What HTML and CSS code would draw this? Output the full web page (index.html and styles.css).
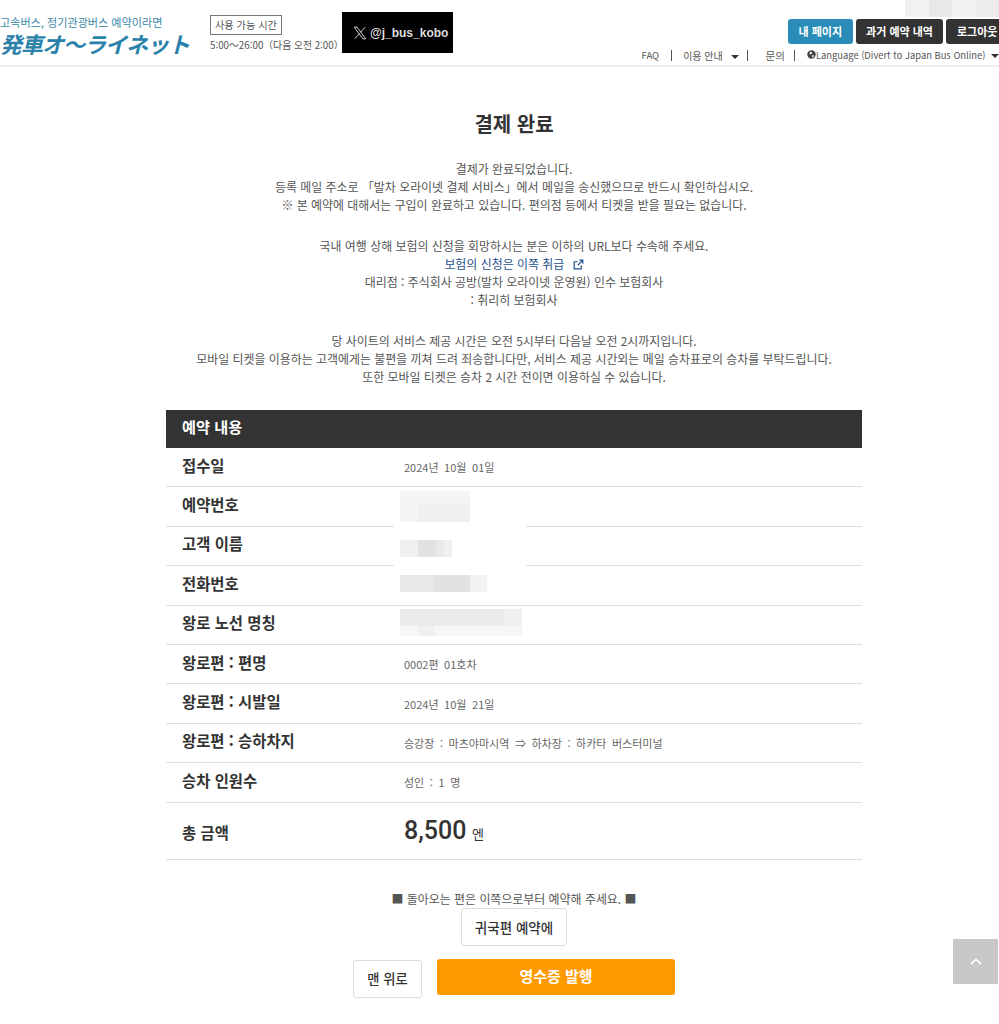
FILE: index.html
```html
<!DOCTYPE html>
<html lang="ko">
<head>
    <meta charset="UTF-8">
    <meta name="viewport" content="width=device-width, initial-scale=1.0">
    <title>결제 완료</title>
    <link rel="stylesheet" href="styles.css">
</head>
<body>
    <header class="site-header">
        <div class="logo">
            <p class="logo-sub">고속버스, 정기관광버스 예약이라면</p>
            <p class="logo-main">発車オ～ライネット</p>
        </div>
        <div class="hours">
            <span class="hours-label">사용 가능 시간</span>
            <p class="hours-time">5:00～26:00（다음 오전 2:00）</p>
        </div>
        <a class="x-link" href="#">
            <svg class="x-icon" viewBox="0 0 24 24" width="14" height="14"><path fill="none" stroke="#ddd" stroke-width="1.6" d="M2 2h5l15 20h-5zM21 2l-8 9M3 22l8-9"/></svg>
            <span>@j_bus_kobo</span>
        </a>
        <div class="header-right">
            <div class="header-buttons">
                <a class="head-btn head-btn-blue" href="#">내 페이지</a>
                <a class="head-btn" href="#">과거 예약 내역</a>
                <a class="head-btn" href="#">로그아웃</a>
            </div>
            <ul class="sub-nav">
                <li class="sub-faq">FAQ</li>
                <li class="sub-guide">이용 안내 <i class="caret"></i></li>
                <li class="sub-contact">문의</li>
                <li class="sub-lang">
                    <svg viewBox="0 0 16 16" width="9" height="9"><circle cx="8" cy="8" r="7.5" fill="#444"/><path fill="#fff" d="M5 3l4 1-1 3-3 1zM9 9l4 1-3 4z"/></svg>Language (Divert to Japan Bus Online) <i class="caret"></i>
                </li>
            </ul>
        </div>
    </header>
    <div class="mosaic-top"><i></i><i></i><i></i><i></i></div>

    <main class="content">
        <h1 class="page-title">결제 완료</h1>

        <div class="message">
            <p>결제가 완료되었습니다.</p>
            <p>등록 메일 주소로 「발차 오라이넷 결제 서비스」에서 메일을 송신했으므로 반드시 확인하십시오.</p>
            <p>※ 본 예약에 대해서는 구입이 완료하고 있습니다. 편의점 등에서 티켓을 받을 필요는 없습니다.</p>
        </div>
        <div class="message">
            <p>국내 여행 상해 보험의 신청을 회망하시는 분은 이하의 URL보다 수속해 주세요.</p>
            <p><a class="link" href="#">보험의 신청은 이쪽 취급
                <svg viewBox="0 0 14 14" width="11" height="11"><path fill="none" stroke="#1d4f8c" stroke-width="1.5" d="M10.5 8v4.5h-9v-9H6M8 1.5h4.5V6M12.5 1.5L6 8"/></svg></a></p>
            <p>대리점 : 주식회사 공방(발차 오라이넷 운영원) 인수 보험회사</p>
            <p>: 취리히 보험회사</p>
        </div>
        <div class="message">
            <p>당 사이트의 서비스 제공 시간은 오전 5시부터 다음날 오전 2시까지입니다.</p>
            <p>모바일 티켓을 이용하는 고객에게는 불편을 끼쳐 드려 죄송합니다만, 서비스 제공 시간외는 메일 승차표로의 승차를 부탁드립니다.</p>
            <p>또한 모바일 티켓은 승차 2 시간 전이면 이용하실 수 있습니다.</p>
        </div>

        <section class="summary">
            <h2 class="summary-title">예약 내용</h2>
            <div class="row"><div class="row-label">접수일</div><div class="row-value">2024년 10월 01일</div></div>
            <div class="row"><div class="row-label">예약번호</div><div class="row-value"></div></div>
            <div class="row"><div class="row-label">고객 이름</div><div class="row-value"></div></div>
            <div class="row"><div class="row-label">전화번호</div><div class="row-value"></div></div>
            <div class="row"><div class="row-label">왕로 노선 명칭</div><div class="row-value"></div></div>
            <div class="row"><div class="row-label">왕로편 : 편명</div><div class="row-value">0002편 01호차</div></div>
            <div class="row"><div class="row-label">왕로편 : 시발일</div><div class="row-value">2024년 10월 21일</div></div>
            <div class="row"><div class="row-label">왕로편 : 승하차지</div><div class="row-value">승강장 : 마츠야마시역 ⇒ 하차장 : 하카타 버스터미널</div></div>
            <div class="row"><div class="row-label">승차 인원수</div><div class="row-value">성인 : 1 명</div></div>
            <div class="row row-total"><div class="row-label">총 금액</div><div class="row-value"><span class="price">8,500</span> <span class="yen">엔</span></div></div>

            <!-- blurred personal data -->
            <svg class="redact" width="132" height="152" viewBox="0 0 132 152">
                <rect x="0" y="34" width="132" height="80" fill="#fff"/>
                <rect x="6" y="0" width="70" height="31" fill="#f5f5f5"/>
                <rect x="24" y="12" width="52" height="19" fill="#f0f0f0"/>
                <rect x="6" y="49" width="52" height="17" fill="#f0f0f0"/>
                <rect x="24" y="49" width="18" height="17" fill="#e2e2e2"/>
                <rect x="42" y="49" width="8" height="17" fill="#e9e9e9"/>
                <rect x="6" y="84" width="87" height="17" fill="#f2f2f2"/>
                <rect x="6" y="84" width="70" height="17" fill="#e8e8e8"/>
                <rect x="40" y="84" width="36" height="17" fill="#e2e2e2"/>
                <rect x="6" y="118" width="122" height="17" fill="#f0f0f0"/>
                <rect x="6" y="118" width="104" height="17" fill="#eaeaea"/>
                <rect x="6" y="135" width="122" height="10" fill="#f6f6f6"/>
                <rect x="24" y="135" width="16" height="10" fill="#f0f0f0"/>
            </svg>
        </section>

        <p class="return-note">■ 돌아오는 편은 이쪽으로부터 예약해 주세요. ■</p>
        <div class="return-action"><a class="btn-white btn-return" href="#">귀국편 예약에</a></div>
        <div class="actions">
            <a class="btn-white btn-top" href="#">맨 위로</a>
            <a class="btn-orange" href="#">영수증 발행</a>
        </div>
    </main>

    <a class="to-top" href="#">
        <svg viewBox="0 0 14 8" width="12" height="7"><path fill="none" stroke="#fff" stroke-width="2" d="M1 7l6-5.5L13 7"/></svg>
    </a>
</body>
</html>
```

FILE: styles.css
```css
* {
    box-sizing: border-box;
}
html, body {
    overflow-x: hidden;
}
body {
    margin: 0;
    background: #fff;
    color: #555;
    font-family: "Noto Sans CJK KR", "Noto Sans", sans-serif;
    font-size: 11.95px;
}
p, h1, h2, ul {
    margin: 0;
    padding: 0;
}
a {
    text-decoration: none;
}

/* header */
.site-header {
    display: flex;
    height: 67px;
    border-bottom: 2px solid #eee;
    width: 999px;
    overflow: hidden;
}
.logo {
    width: 210px;
    padding-top: 15px;
}
.logo-sub {
    color: #3a87a8;
    font-size: 11.1px;
    line-height: 14px;
    white-space: nowrap;
}
.logo-main {
    margin-top: 2px;
    color: #2a82aa;
    font-family: "Noto Sans CJK JP", sans-serif;
    font-size: 22px;
    font-weight: 700;
    font-style: italic;
    line-height: 24px;
    letter-spacing: -1px;
    white-space: nowrap;
}
.hours {
    width: 132px;
    padding-top: 15px;
}
.hours-label {
    display: inline-block;
    border: 1px solid #777;
    padding: 0 4px;
    line-height: 18px;
    font-size: 10.2px;
    color: #555;
}
.hours-time {
    margin-top: 3px;
    font-size: 9.8px;
    line-height: 14px;
    white-space: nowrap;
}
.x-link {
    display: flex;
    align-items: center;
    gap: 3px;
    width: 111px;
    height: 41px;
    margin-top: 12px;
    padding-left: 11px;
    background: #000;
    color: #ddd;
    font-family: "Liberation Sans", sans-serif;
    font-size: 12px;
    font-weight: 700;
}
.header-right {
    flex: 1;
    display: flex;
    flex-direction: column;
    align-items: flex-end;
    padding-top: 19px;
    min-width: 0;
}
.header-buttons {
    display: flex;
    gap: 3px;
    width: 211px;
}
.head-btn {
    flex: none;
    height: 25px;
    line-height: 24px;
    padding: 0 10.5px;
    border-radius: 3px;
    background: #333;
    color: #fff;
    font-size: 11px;
    font-weight: 700;
    white-space: nowrap;
}
.head-btn-blue {
    background: #2a8db8;
}
.sub-nav {
    display: flex;
    list-style: none;
    margin-top: 6px;
    font-size: 9.5px;
    white-space: nowrap;
}
.sub-nav li {
    height: 11px;
    line-height: 11px;
    border-right: 1px solid #555;
}
.sub-nav .sub-faq {
    padding-right: 12px;
}
.sub-nav .sub-guide {
    padding: 0 8px 0 11px;
    font-size: 10px;
}
.sub-nav .sub-guide .caret {
    margin-left: 5px;
}
.sub-nav .sub-contact {
    padding: 0 9px 0 18px;
    font-size: 10.5px;
}
.sub-nav .sub-lang {
    border: 0;
    padding: 0 0 0 12px;
    font-size: 9.4px;
}
.caret {
    display: inline-block;
    width: 0;
    height: 0;
    margin-left: 3px;
    vertical-align: 1px;
    border-left: 4px solid transparent;
    border-right: 4px solid transparent;
    border-top: 4px solid #333;
}
.mosaic-top {
    position: absolute;
    top: 0;
    left: 905px;
    display: flex;
    width: 94px;
    height: 17px;
}
.mosaic-top i {
    flex: 1;
    background: #f1f1f1;
}
.mosaic-top i:nth-child(2) {
    background: #e8e8e8;
}
.mosaic-top i:nth-child(4) {
    background: #ececec;
}

/* main */
.content {
    width: 696px;
    margin-left: 166px;
    padding-top: 44px;
}
.page-title {
    color: #333;
    font-size: 20px;
    font-weight: 700;
    line-height: 26px;
    text-align: center;
    margin-bottom: 23px;
}
.message {
    text-align: center;
    line-height: 18px;
    margin-bottom: 23px;
    white-space: nowrap;
}
.link {
    color: #1d4f8c;
}
.link svg {
    margin-left: 5px;
    vertical-align: -1px;
}

/* summary table */
.summary {
    position: relative;
    margin-top: 24px;
}
.summary-title {
    height: 38px;
    padding-left: 16px;
    background: #333;
    color: #fff;
    font-size: 15.2px;
    font-weight: 700;
    line-height: 33px;
}
.row {
    display: flex;
    align-items: center;
    height: 39.4px;
    border-bottom: 1px solid #ddd;
}
.row-label {
    width: 238px;
    padding: 0 0 5px 16px;
    color: #333;
    font-size: 15.4px;
    font-weight: 700;
}
.row-value {
    color: #666;
    font-size: 11px;
    word-spacing: 2.5px;
}
.row-total {
    height: 57px;
}
.row-total .row-label {
    padding-bottom: 0;
    padding-top: 3px;
}
.price {
    color: #333;
    font-family: "Roboto", sans-serif;
    font-size: 25px;
    font-weight: 500;
}
.yen {
    margin-left: 0;
    color: #333;
    font-size: 13px;
}
.redact {
    position: absolute;
    left: 228px;
    top: 81px;
}

/* buttons */
.return-note {
    margin-top: 30px;
    text-align: center;
    line-height: 18px;
}
.return-action {
    display: flex;
    justify-content: center;
}
.btn-white {
    display: block;
    border: 1px solid #ddd;
    border-radius: 3px;
    background: #fff;
    color: #333;
    font-weight: 500;
    text-align: center;
}
.btn-return {
    width: 106px;
    height: 38px;
    font-size: 13.5px;
    line-height: 36px;
}
.actions {
    display: flex;
    align-items: flex-start;
    gap: 15px;
    margin-left: 187px;
    margin-top: 13px;
}
.btn-top {
    width: 69px;
    height: 38px;
    font-size: 13.3px;
    line-height: 36px;
    margin-top: 1px;
}
.btn-orange {
    display: block;
    width: 238px;
    height: 36px;
    border-radius: 3px;
    background: #f90;
    color: #fff;
    font-size: 15px;
    font-weight: 700;
    line-height: 34px;
    text-align: center;
}
.to-top {
    position: fixed;
    left: 953px;
    top: 939px;
    display: flex;
    align-items: center;
    justify-content: center;
    width: 45px;
    height: 45px;
    background: #c8c8c8;
}
```
